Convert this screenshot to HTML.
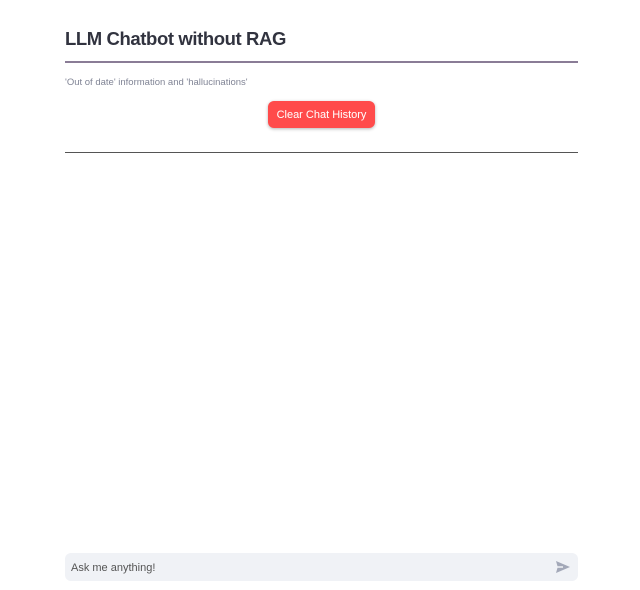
<!DOCTYPE html>
<html><head><style>
body{margin:0;width:640px;height:590px;background:#fff;font-family:"Liberation Sans",sans-serif;position:relative;overflow:hidden}
h1{position:absolute;left:65px;top:28px;margin:0;font-size:18.5px;font-weight:bold;color:#31333f;letter-spacing:-0.4px}
.pl{position:absolute;left:65px;top:61px;width:513px;height:2px;background:#8a7c96}
.cap{position:absolute;left:65px;top:77px;font-size:9.5px;color:#808495}
.btn{position:absolute;left:268px;top:101px;width:107px;height:27px;background:#ff4b4b;border-radius:6px;color:#fff;font-size:11px;line-height:29px;text-align:center;box-shadow:0 1px 3px rgba(0,0,0,.3)}
.dl{position:absolute;left:65px;top:152px;width:513px;height:1px;background:#555}
.inp{position:absolute;left:65px;top:553px;width:513px;height:28px;background:#f0f2f6;border-radius:6px}
.inp span{position:absolute;left:6px;top:9px;font-size:11px;color:#555}
.inp svg{position:absolute;right:8px;top:8px}
</style></head><body>
<h1>LLM Chatbot without RAG</h1>
<div class="pl"></div>
<div class="cap">'Out of date' information and 'hallucinations'</div>
<div class="btn">Clear Chat History</div>
<div class="dl"></div>
<div class="inp"><span>Ask me anything!</span>
<svg width="14" height="12" viewBox="0 0 14 12"><path d="M0 0L14 6L0 12L1.5 6.8H7V5.2H1.5Z" fill="#a3a8b8"/></svg></div>
</body></html>
